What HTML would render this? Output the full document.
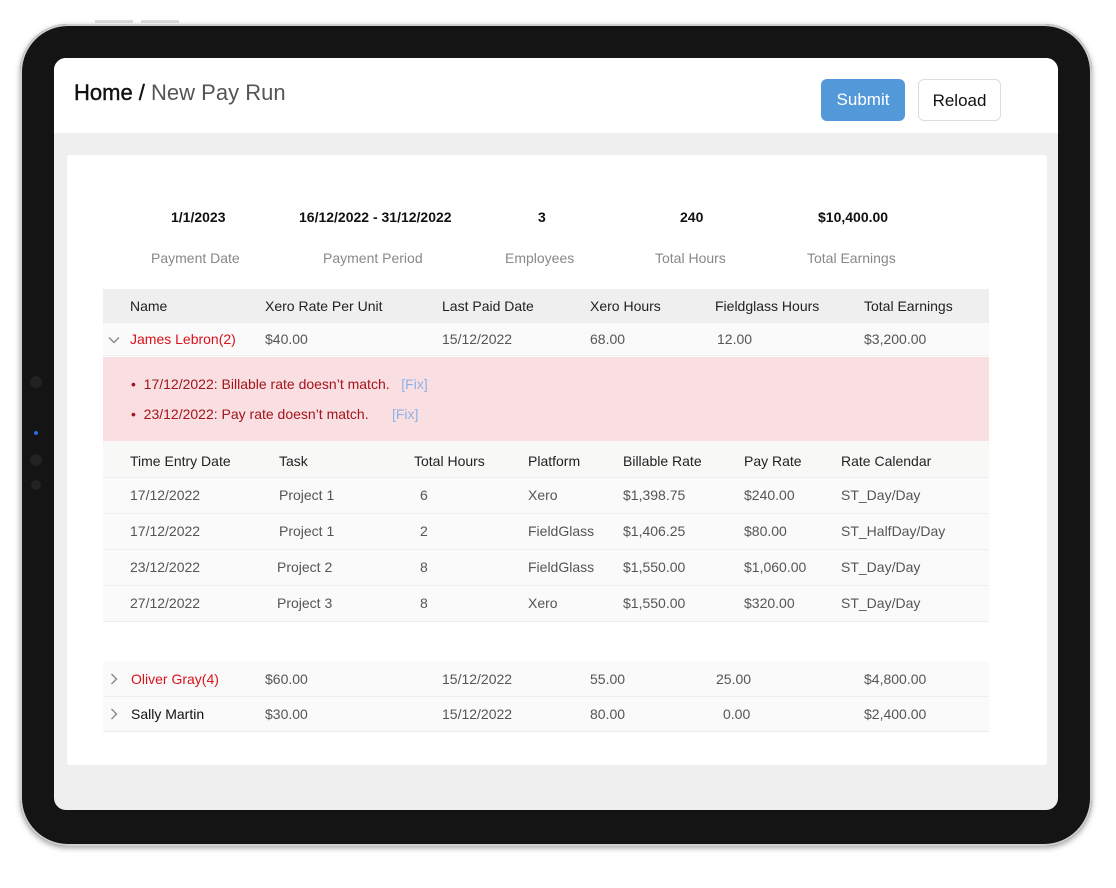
<!DOCTYPE html>
<html><head><meta charset="utf-8"><style>
*{margin:0;padding:0;box-sizing:border-box}
body{width:1116px;height:888px;background:#fff;position:relative;font-family:"Liberation Sans",sans-serif;overflow:hidden}
.dev{position:absolute;left:20px;top:24px;width:1072px;height:822px;background:#141414;border-radius:48px;box-shadow:0 2px 6px rgba(0,0,0,.35),inset 0 0 0 2px #cfcfcf}
.scr{position:absolute;left:54px;top:58px;width:1004px;height:752px;background:#efefef;border-radius:12px;overflow:hidden}
.hdr{position:absolute;left:0;top:0;width:1004px;height:75px;background:#fff}
.card{position:absolute;left:13px;top:97px;width:980px;height:610px;background:#fff;border-radius:3px}
.t{position:absolute;white-space:nowrap;font-size:14px;color:#555}
.r{position:absolute;left:49px;width:886px}
.btn{position:absolute;top:21px;height:42px;border-radius:6px;font-size:17px;line-height:42px;text-align:center}
.dot{position:absolute;border-radius:50%;background:#222}
svg{position:absolute}
</style></head><body>
<div style="position:absolute;left:95px;top:20px;width:38px;height:3px;background:#ddd"></div>
<div style="position:absolute;left:141px;top:20px;width:38px;height:3px;background:#ddd"></div>
<div class="dev"></div>
<div class="dot" style="left:30px;top:376px;width:12px;height:12px"></div>
<div class="dot" style="left:34px;top:431px;width:4px;height:4px;background:#2a6adf"></div>
<div class="dot" style="left:30px;top:454px;width:12px;height:12px"></div>
<div class="dot" style="left:31px;top:480px;width:10px;height:10px"></div>
<div class="scr">
 <div class="hdr">
  <div class="t" style="left:20px;top:22px;font-size:22px;color:#111"><span style="-webkit-text-stroke:0.4px #111">Home /</span> <span style="color:#555">New Pay Run</span></div>
  <div class="btn" style="left:767px;width:84px;background:#5399d9;color:#fff">Submit</div>
  <div class="btn" style="left:864px;width:83px;border:1px solid #ddd;color:#111">Reload</div>
 </div>
 <div class="card"></div>
 <div class="t" style="left:117px;top:151px;color:#111;font-weight:bold">1/1/2023</div>
 <div class="t" style="left:245px;top:151px;color:#111;font-weight:bold">16/12/2022 - 31/12/2022</div>
 <div class="t" style="left:484px;top:151px;color:#111;font-weight:bold">3</div>
 <div class="t" style="left:626px;top:151px;color:#111;font-weight:bold">240</div>
 <div class="t" style="left:764px;top:151px;color:#111;font-weight:bold">$10,400.00</div>
 <div class="t" style="left:97px;top:192px;color:#888">Payment Date</div>
 <div class="t" style="left:269px;top:192px;color:#888">Payment Period</div>
 <div class="t" style="left:451px;top:192px;color:#888">Employees</div>
 <div class="t" style="left:601px;top:192px;color:#888">Total Hours</div>
 <div class="t" style="left:753px;top:192px;color:#888">Total Earnings</div>

 <div class="r" style="top:231px;height:34px;background:#efefef"></div>
 <div class="r" style="top:265px;height:33px;background:#fafafa;border-bottom:1px solid #eee"></div>
 <div class="r" style="top:299px;height:84px;background:#f9dfe2"></div>
 <div class="r" style="top:383px;height:37px;background:#f8f8f6;border-bottom:1px solid #eee"></div>
 <div class="r" style="top:420px;height:36px;background:#fafafa;border-bottom:1px solid #eee"></div>
 <div class="r" style="top:456px;height:36px;background:#fafafa;border-bottom:1px solid #eee"></div>
 <div class="r" style="top:492px;height:36px;background:#fafafa;border-bottom:1px solid #eee"></div>
 <div class="r" style="top:528px;height:36px;background:#fafafa;border-bottom:1px solid #eee"></div>
 <div class="r" style="top:604px;height:35px;background:#fafafa;border-bottom:1px solid #eee"></div>
 <div class="r" style="top:639px;height:35px;background:#fafafa;border-bottom:1px solid #eee"></div>

 <div class="t" style="left:76px;top:240px;color:#222">Name</div>
 <div class="t" style="left:211px;top:240px;color:#222">Xero Rate Per Unit</div>
 <div class="t" style="left:388px;top:240px;color:#222">Last Paid Date</div>
 <div class="t" style="left:536px;top:240px;color:#222">Xero Hours</div>
 <div class="t" style="left:661px;top:240px;color:#222">Fieldglass Hours</div>
 <div class="t" style="left:810px;top:240px;color:#222">Total Earnings</div>

 <svg style="left:54px;top:278px" width="12" height="8" viewBox="0 0 12 8"><path d="M1 1.5L6 6.5L11 1.5" fill="none" stroke="#888" stroke-width="1.4"/></svg>
 <div class="t" style="left:76px;top:273px;color:#d8121b">James Lebron(2)</div>
 <div class="t" style="left:211px;top:273px">$40.00</div>
 <div class="t" style="left:388px;top:273px">15/12/2022</div>
 <div class="t" style="left:536px;top:273px">68.00</div>
 <div class="t" style="left:663px;top:273px">12.00</div>
 <div class="t" style="left:810px;top:273px">$3,200.00</div>

 <div class="t" style="left:77px;top:318px;color:#a3141c">•&nbsp; 17/12/2022: Billable rate doesn’t match.&nbsp;&nbsp; <span style="color:#8fb0e8">[Fix]</span></div>
 <div class="t" style="left:77px;top:348px;color:#a3141c">•&nbsp; 23/12/2022: Pay rate doesn’t match.&nbsp;&nbsp;&nbsp;&nbsp;&nbsp; <span style="color:#8fb0e8">[Fix]</span></div>

 <div class="t" style="left:76px;top:395px;color:#222">Time Entry Date</div>
 <div class="t" style="left:225px;top:395px;color:#222">Task</div>
 <div class="t" style="left:360px;top:395px;color:#222">Total Hours</div>
 <div class="t" style="left:474px;top:395px;color:#222">Platform</div>
 <div class="t" style="left:569px;top:395px;color:#222">Billable Rate</div>
 <div class="t" style="left:690px;top:395px;color:#222">Pay Rate</div>
 <div class="t" style="left:787px;top:395px;color:#222">Rate Calendar</div>

 <div class="t" style="left:76px;top:429px">17/12/2022</div><div class="t" style="left:225px;top:429px">Project 1</div><div class="t" style="left:366px;top:429px">6</div><div class="t" style="left:474px;top:429px">Xero</div><div class="t" style="left:569px;top:429px">$1,398.75</div><div class="t" style="left:690px;top:429px">$240.00</div><div class="t" style="left:787px;top:429px">ST_Day/Day</div>
 <div class="t" style="left:76px;top:465px">17/12/2022</div><div class="t" style="left:225px;top:465px">Project 1</div><div class="t" style="left:366px;top:465px">2</div><div class="t" style="left:474px;top:465px">FieldGlass</div><div class="t" style="left:569px;top:465px">$1,406.25</div><div class="t" style="left:690px;top:465px">$80.00</div><div class="t" style="left:787px;top:465px">ST_HalfDay/Day</div>
 <div class="t" style="left:76px;top:501px">23/12/2022</div><div class="t" style="left:223px;top:501px">Project 2</div><div class="t" style="left:366px;top:501px">8</div><div class="t" style="left:474px;top:501px">FieldGlass</div><div class="t" style="left:569px;top:501px">$1,550.00</div><div class="t" style="left:690px;top:501px">$1,060.00</div><div class="t" style="left:787px;top:501px">ST_Day/Day</div>
 <div class="t" style="left:76px;top:537px">27/12/2022</div><div class="t" style="left:223px;top:537px">Project 3</div><div class="t" style="left:366px;top:537px">8</div><div class="t" style="left:474px;top:537px">Xero</div><div class="t" style="left:569px;top:537px">$1,550.00</div><div class="t" style="left:690px;top:537px">$320.00</div><div class="t" style="left:787px;top:537px">ST_Day/Day</div>

 <svg style="left:56px;top:615px" width="8" height="12" viewBox="0 0 8 12"><path d="M1.5 1L6.5 6L1.5 11" fill="none" stroke="#888" stroke-width="1.4"/></svg>
 <div class="t" style="left:77px;top:613px;color:#d8121b">Oliver Gray(4)</div>
 <div class="t" style="left:211px;top:613px">$60.00</div><div class="t" style="left:388px;top:613px">15/12/2022</div><div class="t" style="left:536px;top:613px">55.00</div><div class="t" style="left:662px;top:613px">25.00</div><div class="t" style="left:810px;top:613px">$4,800.00</div>
 <svg style="left:56px;top:650px" width="8" height="12" viewBox="0 0 8 12"><path d="M1.5 1L6.5 6L1.5 11" fill="none" stroke="#888" stroke-width="1.4"/></svg>
 <div class="t" style="left:77px;top:648px;color:#111">Sally Martin</div>
 <div class="t" style="left:211px;top:648px">$30.00</div><div class="t" style="left:388px;top:648px">15/12/2022</div><div class="t" style="left:536px;top:648px">80.00</div><div class="t" style="left:669px;top:648px">0.00</div><div class="t" style="left:810px;top:648px">$2,400.00</div>
</div>
</body></html>
